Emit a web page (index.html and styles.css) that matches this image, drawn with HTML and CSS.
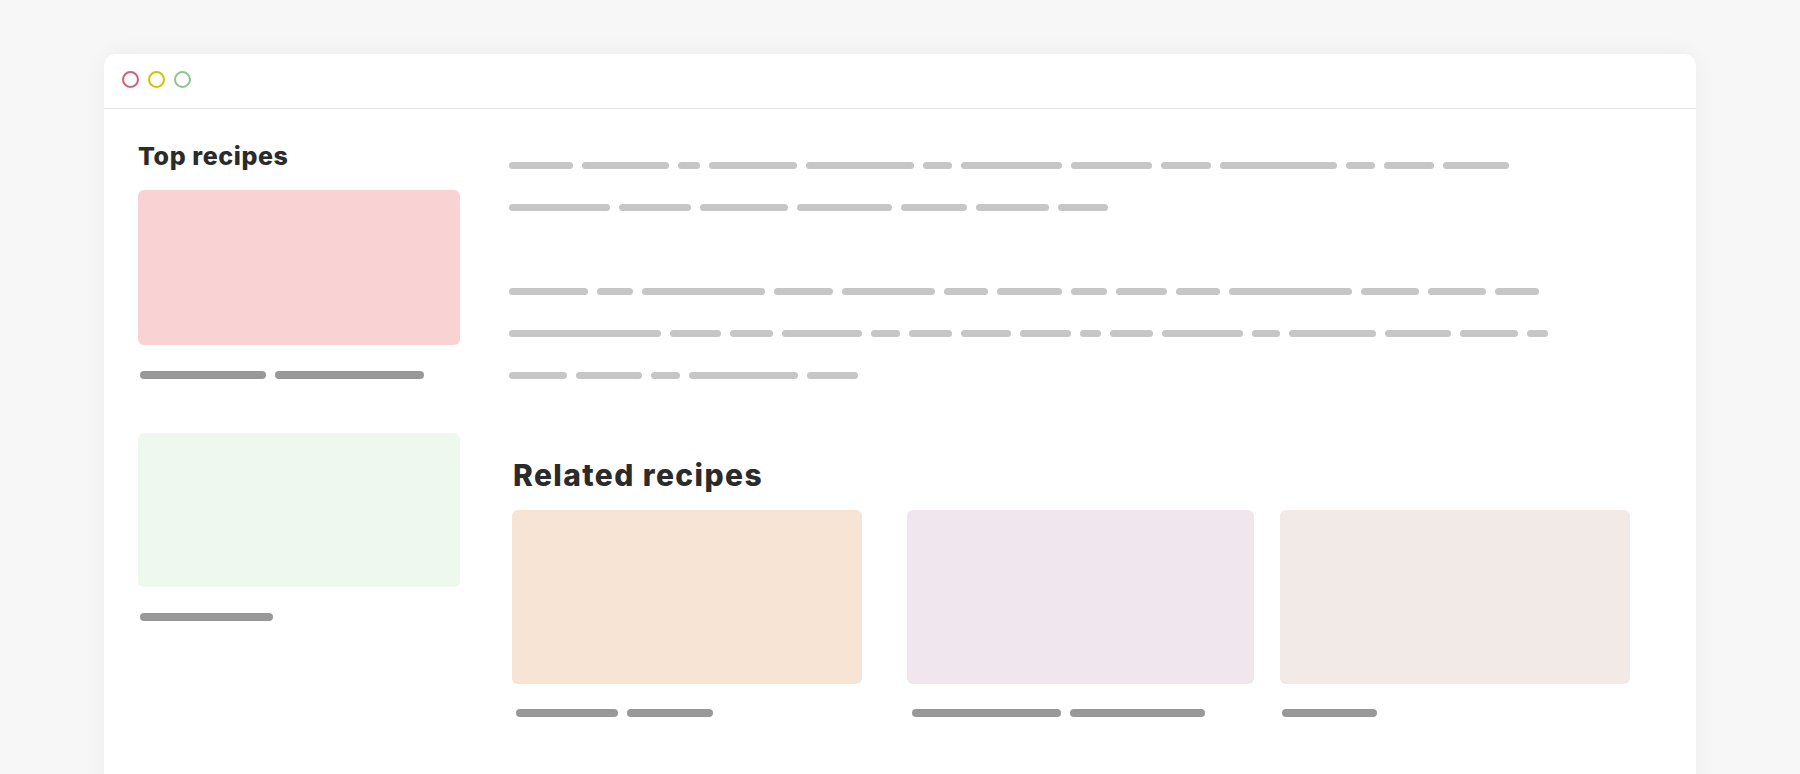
FILE: index.html
```html
<!DOCTYPE html>
<html lang="en">
<head>
<meta charset="utf-8">
<title>Recipes wireframe</title>
<link rel="stylesheet" href="styles.css">
</head>
<body>
<div class="window">
  <div class="titlebar">
    <span class="dot dot-red"></span>
    <span class="dot dot-yellow"></span>
    <span class="dot dot-green"></span>
  </div>
  <div class="content">
    <aside class="sidebar">
      <h2 class="side-title">Top recipes</h2>
      <div class="thumb thumb-pink"></div>
      <div class="caption">
        <span class="bar" style="width:126px"></span>
        <span class="bar" style="width:149px"></span>
      </div>
      <div class="thumb thumb-green thumb-second"></div>
      <div class="caption">
        <span class="bar" style="width:133px"></span>
      </div>
    </aside>
    <main class="main">
      <div class="para">
        <div class="line">
          <span class="ln" style="width:64px"></span><span class="ln" style="width:87px"></span><span class="ln" style="width:22px"></span><span class="ln" style="width:88px"></span><span class="ln" style="width:108px"></span><span class="ln" style="width:29px"></span><span class="ln" style="width:101px"></span><span class="ln" style="width:81px"></span><span class="ln" style="width:50px"></span><span class="ln" style="width:117px"></span><span class="ln" style="width:29px"></span><span class="ln" style="width:50px"></span><span class="ln" style="width:66px"></span>
        </div>
        <div class="line">
          <span class="ln" style="width:101px"></span><span class="ln" style="width:72px"></span><span class="ln" style="width:88px"></span><span class="ln" style="width:95px"></span><span class="ln" style="width:66px"></span><span class="ln" style="width:73px"></span><span class="ln" style="width:50px"></span>
        </div>
      </div>
      <div class="para para-second">
        <div class="line">
          <span class="ln" style="width:79px"></span><span class="ln" style="width:36px"></span><span class="ln" style="width:123px"></span><span class="ln" style="width:59px"></span><span class="ln" style="width:93px"></span><span class="ln" style="width:44px"></span><span class="ln" style="width:65px"></span><span class="ln" style="width:36px"></span><span class="ln" style="width:51px"></span><span class="ln" style="width:44px"></span><span class="ln" style="width:123px"></span><span class="ln" style="width:58px"></span><span class="ln" style="width:58px"></span><span class="ln" style="width:44px"></span>
        </div>
        <div class="line">
          <span class="ln" style="width:152px"></span><span class="ln" style="width:51px"></span><span class="ln" style="width:43px"></span><span class="ln" style="width:80px"></span><span class="ln" style="width:29px"></span><span class="ln" style="width:43px"></span><span class="ln" style="width:50px"></span><span class="ln" style="width:51px"></span><span class="ln" style="width:21px"></span><span class="ln" style="width:43px"></span><span class="ln" style="width:81px"></span><span class="ln" style="width:28px"></span><span class="ln" style="width:87px"></span><span class="ln" style="width:66px"></span><span class="ln" style="width:58px"></span><span class="ln" style="width:21px"></span>
        </div>
        <div class="line">
          <span class="ln" style="width:58px"></span><span class="ln" style="width:66px"></span><span class="ln" style="width:29px"></span><span class="ln" style="width:109px"></span><span class="ln" style="width:51px"></span>
        </div>
      </div>
      <h2 class="related-title">Related recipes</h2>
      <div class="related">
        <div class="rcard rcard-a">
          <div class="rthumb thumb-peach"></div>
          <div class="caption caption-a">
            <span class="bar" style="width:102px"></span>
            <span class="bar" style="width:86px"></span>
          </div>
        </div>
        <div class="rcard rcard-b">
          <div class="rthumb thumb-lavender"></div>
          <div class="caption caption-b">
            <span class="bar" style="width:149px"></span>
            <span class="bar" style="width:135px"></span>
          </div>
        </div>
        <div class="rcard rcard-c">
          <div class="rthumb thumb-beige"></div>
          <div class="caption caption-c">
            <span class="bar" style="width:95px"></span>
          </div>
        </div>
      </div>
    </main>
  </div>
</div>
</body>
</html>
```

FILE: styles.css
```css
* { box-sizing: border-box; }

html, body {
  margin: 0;
  padding: 0;
  height: 100%;
  overflow: hidden;
}

body {
  background: #f7f7f7;
  font-family: Inter, "Noto Sans", "Liberation Sans", sans-serif;
  padding: 54px 0 0 104px;
}

.window {
  width: 1592px;
  height: 760px;
  background: #ffffff;
  border-radius: 12px 12px 0 0;
  box-shadow: 0 0 22px rgba(0, 0, 0, 0.05);
}

.titlebar {
  height: 55px;
  border-bottom: 1px solid #e6e6e6;
  display: flex;
  align-items: flex-start;
  gap: 9px;
  padding: 17px 0 0 18px;
}

.dot {
  width: 17px;
  height: 17px;
  border-radius: 50%;
  border: 2px solid;
  display: block;
}
.dot-red { border-color: #d0607a; }
.dot-yellow { border-color: #d6c00c; }
.dot-green { border-color: #8fc78e; }

.content {
  display: flex;
  padding: 31px 34px 0 34px;
}

.sidebar {
  width: 322px;
  flex: none;
}

.side-title {
  margin: 0;
  font-size: 25px;
  line-height: 32px;
  font-weight: 800;
  color: #2b2b2b;
  letter-spacing: 0.6px;
}

.thumb {
  width: 322px;
  height: 155px;
  border-radius: 6px;
  margin-top: 18px;
}
.thumb-second {
  margin-top: 54px;
  height: 154px;
}
.thumb-pink { background: #f9d3d3; }
.thumb-green { background: #eff8ee; }

.caption {
  display: flex;
  gap: 9px;
  margin-top: 26px;
  padding-left: 2px;
}

.bar {
  display: block;
  height: 8px;
  border-radius: 4px;
  background: #989898;
}

.main {
  margin-left: 49px;
  flex: 1;
}

.para {
  padding-top: 22px;
  display: flex;
  flex-direction: column;
  gap: 35px;
}
.para-second {
  padding-top: 77px;
}

.line {
  display: flex;
  gap: 9px;
}

.ln {
  display: block;
  height: 7px;
  border-radius: 4px;
  background: #c6c6c6;
}

.related-title {
  margin: 78px 0 0 4px;
  font-size: 30px;
  line-height: 36px;
  font-weight: 800;
  color: #2b2b2b;
  letter-spacing: 1.4px;
}

.related {
  display: flex;
  margin-top: 17px;
  margin-left: 3px;
}

.rcard { flex: none; }
.rcard-a { width: 350px; margin-right: 45px; }
.rcard-b { width: 347px; margin-right: 26px; }
.rcard-c { width: 350px; }

.rthumb {
  height: 174px;
  border-radius: 6px;
}
.thumb-peach { background: #f7e4d4; }
.thumb-lavender { background: #efe6ee; }
.thumb-beige { background: #f2eae6; }

.caption-a { margin-top: 25px; padding-left: 4px; }
.caption-b { margin-top: 25px; padding-left: 5px; }
.caption-c { margin-top: 25px; padding-left: 2px; }
```
